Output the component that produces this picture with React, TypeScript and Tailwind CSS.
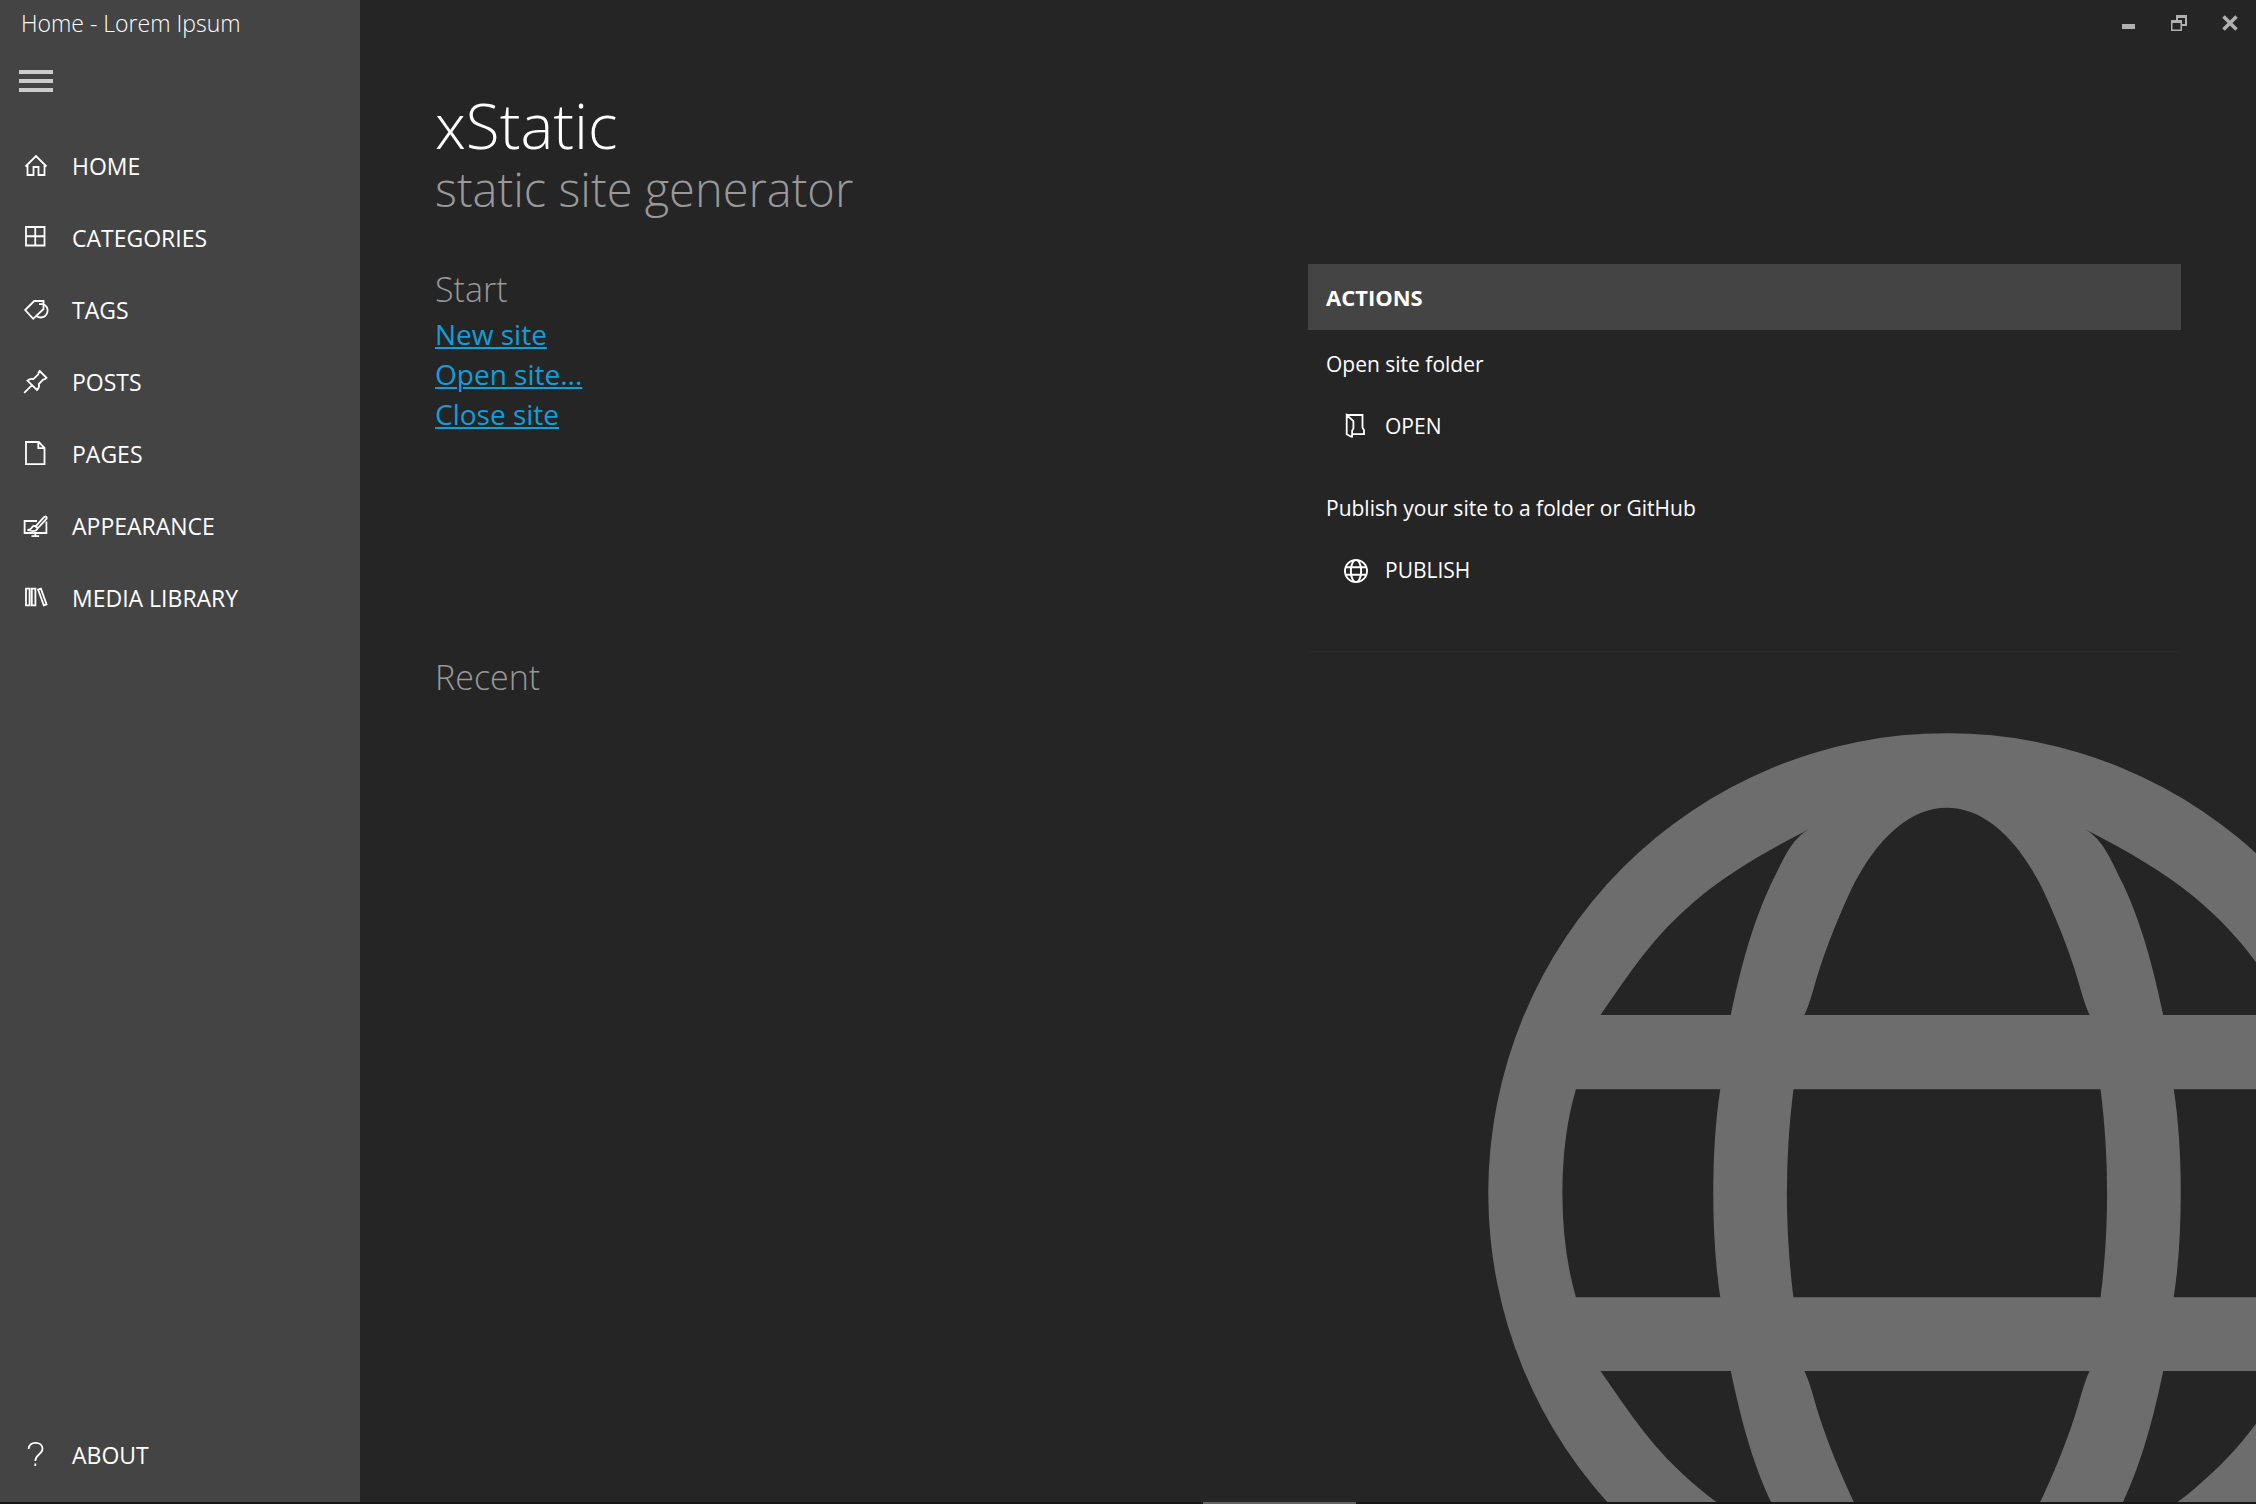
import React from 'react';

type IconProps = { children: React.ReactNode };

const Icon: React.FC<IconProps> = ({ children }) => (
  <svg
    className="size-7 shrink-0"
    viewBox="0 0 28 28"
    fill="none"
    stroke="currentColor"
    strokeWidth="1.8"
    aria-hidden="true"
  >
    {children}
  </svg>
);

const GlobeIcon: React.FC<{ className: string }> = ({ className }) => (
  <svg className={className} viewBox="36 28 1831 1836" fill="currentColor" aria-hidden="true">
    <path
      fillRule="evenodd"
      d="M36 946A915.5 918 0 0 1 1867 946A915.5 918 0 0 1 36 946Z
        M667 591Q675 574 684 543Q708 454 760 341C812 235 880 177 951.5 177C1023 177 1091 235 1143 341Q1195 454 1219 543Q1228 574 1236 591Z
        M260 591H520C545 470 570 395 600 330C625 280 640 240 676 220C590 264 515 308 460 354C375 425 340 475 260 591Z
        M1643 591H1383C1358 470 1333 395 1303 330C1278 280 1263 240 1227 220C1313 264 1388 308 1443 354C1528 425 1563 475 1643 591Z
        M211 739H499Q485 830 485 946Q485 1062 499 1154H211Q184 1062 184 946Q184 830 211 739Z
        M645 739H1258Q1284 946 1258 1154H645Q619 946 645 739Z
        M1692 739H1404Q1418 830 1418 946Q1418 1062 1404 1154H1692Q1719 1062 1719 946Q1719 830 1692 739Z
        M260 1301H520C545 1422 570 1497 600 1562C625 1612 640 1652 676 1672C590 1628 515 1584 460 1538C375 1467 340 1417 260 1301Z
        M1643 1301H1383C1358 1422 1333 1497 1303 1562C1278 1612 1263 1652 1227 1672C1313 1628 1388 1584 1443 1538C1528 1467 1563 1417 1643 1301Z
        M667 1301Q675 1318 684 1349Q708 1438 760 1551C812 1657 880 1715 951.5 1715C1023 1715 1091 1657 1143 1551Q1195 1438 1219 1349Q1228 1318 1236 1301Z"
    />
  </svg>
);

const navItems = [
  {
    label: 'HOME',
    icon: (
      <Icon>
        <path d="M3.5 14.5 14 4l10.5 10.5M5.5 12.5V23h6v-8h5v8h6V12.5" />
      </Icon>
    ),
  },
  {
    label: 'CATEGORIES',
    icon: (
      <Icon>
        <path d="M4 3h18.5v18.5H4zM13.25 3v18.5M4 12.25h18.5" />
      </Icon>
    ),
  },
  {
    label: 'TAGS',
    icon: (
      <Icon>
        <path d="M3.2 14 12.2 5h9.3v8L11.2 22.8z" />
        <path d="M17 8.2h3.5C24 9.2 25.6 11.6 25.6 14.6c0 3.8-2.8 6.9-6.4 6.9-2 0-3.8-.5-5.2-1.4" />
      </Icon>
    ),
  },
  {
    label: 'POSTS',
    icon: (
      <Icon>
        <path d="M2.2 24.8 10 17.2M17.7 3 24.5 9.8c-1.2 1.4-2.4 1.8-3.4 1.8L16.8 16c.7 2 .2 4-1.8 6L5.4 12.6c2-1.7 4-2.1 6-1.5l4.9-4.8c0-1.2.4-2.3 1.4-3.3z" />
      </Icon>
    ),
  },
  {
    label: 'PAGES',
    icon: (
      <Icon>
        <path d="M4 2h12.7l5.8 5.8v16.4H4zM16.3 2v6.2h6.2" />
      </Icon>
    ),
  },
  {
    label: 'APPEARANCE',
    icon: (
      <Icon>
        <path d="M15 9H2.6v12h21.8V9.5M13.3 21v3.5M9.5 24.2h7.6" />
        <path d="M13.6 14.4 22 5.2c.8-.9 1.8-.8 2.3-.3.6.5.6 1.4-.1 2.2l-8.5 9.2zM5.5 18c2.4 0 3-.6 4-2.1 1-1.6 2.8-2.2 4.1-1.5 1.6.8 2.2 2 1.4 3.1-1.6 2-6 1.7-9.5.5z" />
      </Icon>
    ),
  },
  {
    label: 'MEDIA LIBRARY',
    icon: (
      <Icon>
        <path d="M4 4.7h3.6v16.6H4zM9.8 4.7h3.6v16.6H9.8zM16.1 5.6l2.8-1 5.7 15.8-2.8 1z" />
      </Icon>
    ),
  },
];

const NavButton: React.FC<{ label: string; icon: React.ReactNode }> = ({ label, icon }) => (
  <button type="button" className="flex h-[72px] w-full items-center gap-[22px] pl-[22px] text-[23px]">
    {icon}
    <span>{label}</span>
  </button>
);

const WindowControls: React.FC = () => (
  <div className="flex h-[46px] items-center justify-end gap-[23px] pr-3 text-[#b0b0b0]">
    <button type="button" aria-label="Minimize" className="p-1.5">
      <svg className="size-4" viewBox="0 0 16 16" fill="currentColor">
        <path d="M2 9h13v5H2z" />
      </svg>
    </button>
    <button type="button" aria-label="Restore" className="p-1.5">
      <svg className="size-4" viewBox="0 0 16 16" fill="currentColor">
        <path fillRule="evenodd" d="M5 0h11v11h-5v5H0V5h5zM7 3v2h4v4h3V3zM1.5 8v6.5h8V8z" />
      </svg>
    </button>
    <button type="button" aria-label="Close" className="p-1.5">
      <svg className="size-4" viewBox="0 0 16 16" stroke="currentColor" strokeWidth="3.6">
        <path d="M1.5 1.5l13 13M14.5 1.5l-13 13" />
      </svg>
    </button>
  </div>
);

type ActionProps = { text: string; label: string; icon: React.ReactNode };

const Action: React.FC<ActionProps> = ({ text, label, icon }) => (
  <div className="mb-[42px] pl-[18px]">
    <p className="text-[21px] leading-[34px]">{text}</p>
    <button type="button" className="mt-6 flex h-11 items-center gap-[15px] px-4 text-[21px]">
      {icon}
      <span>{label}</span>
    </button>
  </div>
);

const App: React.FC = () => {
  const links = ['New site', 'Open site...', 'Close site'];

  return (
    <div className="flex h-screen flex-col bg-[#252525] font-['Open_Sans',sans-serif] text-white">
      <div className="flex min-h-0 flex-1">
        <aside className="flex w-[360px] shrink-0 flex-col bg-[#444444]">
          <div className="flex h-[46px] items-center pl-[21px] text-[23px] font-light">Home - Lorem Ipsum</div>
          <button type="button" aria-label="Menu" className="flex h-[70px] w-[72px] justify-center pt-6">
            <svg className="h-6 w-[34px]" viewBox="0 0 34 24" fill="#cccccc">
              <path d="M0 0h34v4H0zM0 9h34v4H0zM0 18h34v4H0z" />
            </svg>
          </button>
          <nav className="flex flex-1 flex-col pt-[14px] pb-[11px]">
            {navItems.map((item) => (
              <NavButton key={item.label} label={item.label} icon={item.icon} />
            ))}
            <div className="mt-auto">
              <NavButton
                label="ABOUT"
                icon={
                  <Icon>
                    <path d="M6.6 8C6.6 4.2 9.5 1.8 13.5 1.8s7 2.3 7 5.9c0 5.6-7.2 5.9-7.2 12.3M13.3 22.6v2.4" />
                  </Icon>
                }
              />
            </div>
          </nav>
        </aside>

        <main className="relative flex-1 overflow-hidden">
          {/* oversized watermark running off the lower right corner */}
          <div className="absolute -right-[150px] -bottom-[151px] text-[#6d6d6d]">
            <GlobeIcon className="h-[920px] w-[918px]" />
          </div>

          <div className="relative">
            <WindowControls />
            <header className="px-[75px] pt-[39px] font-light">
              <h1 className="text-[62px] leading-[80px]">xStatic</h1>
              <p className="text-[47px] leading-[48px] text-[#999999]">static site generator</p>
            </header>

            <div className="mt-[51px] grid grid-cols-2 px-[75px]">
              <section className="h-[388px]">
                <h2 className="text-[34px] leading-[50px] font-light text-[#999999]">Start</h2>
                <ul>
                  {links.map((link) => (
                    <li key={link} className="text-[28px] leading-10">
                      <a href="#" className="text-[#119eda] underline decoration-2 underline-offset-2">
                        {link}
                      </a>
                    </li>
                  ))}
                </ul>
              </section>

              <section className="h-[388px] border-b border-[#292929]">
                <h2 className="mb-[17px] flex h-[66px] items-center bg-[#444444] pl-[18px] text-[22px] font-bold">
                  ACTIONS
                </h2>
                <Action
                  text="Open site folder"
                  label="OPEN"
                  icon={
                    <Icon>
                      <path d="M4.7 2h15.8v12.7l1.5 2.4v4H11M4.7 2v19.2l4.4 2.5h1v-6l1.3-2.2V8.2z" />
                    </Icon>
                  }
                />
                <Action
                  text="Publish your site to a folder or GitHub"
                  label="PUBLISH"
                  icon={
                    <span className="flex size-7 items-center justify-center">
                      <GlobeIcon className="size-6" />
                    </span>
                  }
                />
              </section>

              <section>
                <h2 className="text-[34px] leading-[50px] font-light text-[#999999]">Recent</h2>
              </section>
            </div>
          </div>
        </main>
      </div>

      {/* edge of the taskbar */}
      <div className="grid h-0.5 shrink-0 grid-cols-[1203fr_153fr_900fr] bg-[#1a1518]">
        <div className="col-start-2 bg-[#666364]" />
      </div>
    </div>
  );
};

export default App;
